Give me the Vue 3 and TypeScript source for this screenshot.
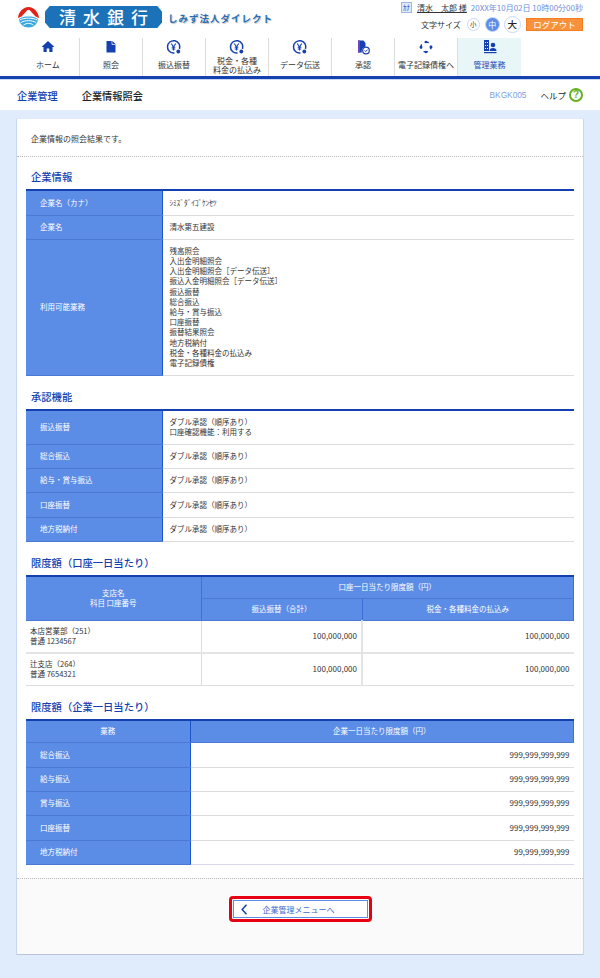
<script setup lang="ts">
const companyRows = [
  { label: '企業名（カナ）', lines: ['ｼﾐｽﾞﾀﾞｲｺﾞｹﾝｾﾂ'], cls: 'h25 kana-row' },
  { label: '企業名', lines: ['清水第五建設'], cls: 'h24' },
  {
    label: '利用可能業務',
    lines: ['残高照会', '入出金明細照会', '入出金明細照会［データ伝送］', '振込入金明細照会［データ伝送］', '振込振替', '総合振込', '給与・賞与振込', '口座振替', '振替結果照会', '地方税納付', '税金・各種料金の払込み', '電子記録債権'],
    cls: 'h136',
  },
]
const approvalRows = [
  { label: '振込振替', lines: ['ダブル承認（順序あり）', '口座確認機能：利用する'], cls: 'h35' },
  { label: '総合振込', lines: ['ダブル承認（順序あり）'], cls: 'h24' },
  { label: '給与・賞与振込', lines: ['ダブル承認（順序あり）'], cls: 'h24' },
  { label: '口座振替', lines: ['ダブル承認（順序あり）'], cls: 'h25' },
  { label: '地方税納付', lines: ['ダブル承認（順序あり）'], cls: 'h24' },
]
const accountRows = [
  { branch: '本店営業部（251）', account: '普通 1234567', cls: 'h33' },
  { branch: '辻支店（264）', account: '普通 7654321', cls: 'h32' },
]
const limitRows = [
  { label: '総合振込', amount: '999,999,999,999', cls: 'h25' },
  { label: '給与振込', amount: '999,999,999,999', cls: 'h24' },
  { label: '賞与振込', amount: '999,999,999,999', cls: 'h24' },
  { label: '口座振替', amount: '999,999,999,999', cls: 'h25' },
  { label: '地方税納付', amount: '99,999,999,999', cls: 'h24' },
]
const navItems = [
  { key: 'home', label: ['ホーム'] },
  { key: 'doc', label: ['照会'] },
  { key: 'yen', label: ['振込振替'] },
  { key: 'yen', label: ['税金・各種', '料金の払込み'] },
  { key: 'yen', label: ['データ伝送'] },
  { key: 'approve', label: ['承認'] },
  { key: 'ring', label: ['電子記録債権へ'] },
  { key: 'admin', label: ['管理業務'], active: true },
]
</script>

<template>
  <div class="page">
    <header class="top">
      <div class="brand">
        <svg class="mark" width="21" height="21" viewBox="0 0 21 21">
          <path d="M0 11 C0.500 5 5 0 10.500 0 C16 0 20.500 5 21 11 L17.500 9.500 L11.500 3 L9.500 3 L3.500 9.500Z" fill="#e2231a" />
          <path d="M0.800 12 C4 10 7 9.500 10.500 9.500 C14 9.500 17 10 20.200 12 C19.500 17 15.500 20.500 10.500 20.500 C5.500 20.500 1.500 17 0.800 12Z" fill="#3aa7de" />
          <path d="M1.500 13 C7 10.500 14 10.500 19.500 13 M2.800 15.500 C8 13 13 13 18.200 15.500 M5.500 18 C9 15.800 12 15.800 15.500 18" stroke="#fff" stroke-width="1" fill="none" />
        </svg>
        <div class="bank">清水銀行</div>
        <div class="tagline">しみず法人ダイレクト</div>
      </div>
      <div class="user">
        <div class="user-line">
          <span class="kana">ｶﾅ</span>
          <span class="name">清水　太郎 様</span>
          <span class="date">20XX年10月02日 10時00分00秒</span>
        </div>
        <div class="tools">
          <span class="size-label">文字サイズ</span>
          <span class="size">小</span>
          <span class="size on">中</span>
          <span class="size big">大</span>
          <span class="logout">ログアウト</span>
        </div>
      </div>
    </header>

    <nav class="nav">
      <div v-for="(item, i) in navItems" :key="i" class="nav-item" :class="{ active: item.active }">
        <svg class="nav-icon" width="18" height="18" viewBox="0 0 18 18" fill="#1540b0">
          <path v-if="item.key === 'home'" d="M9 3 L15.500 9 L13.500 9 L13.500 14 L10.300 14 L10.300 10.500 L7.700 10.500 L7.700 14 L4.500 14 L4.500 9 L2.500 9Z" />
          <g v-else-if="item.key === 'doc'">
            <path d="M4.500 3 L10.500 3 L13.500 6 L13.500 14.500 L4.500 14.500Z" />
            <path d="M10 3 L10 6.500 L13.500 6.500" fill="none" stroke="#fff" stroke-width=".7" />
          </g>
          <g v-else-if="item.key === 'yen'">
            <path d="M14.500 11 A6.200 6.200 0 1 0 9.500 15" fill="none" stroke="#1540b0" stroke-width="1.500" />
            <path d="M6.300 5.500 L8.500 9 L10.700 5.500 M8.500 9 L8.500 12.500 M6.700 9.300 L10.300 9.300 M6.700 11 L10.300 11" fill="none" stroke="#1540b0" stroke-width="1.100" />
            <circle cx="13.300" cy="13.500" r="1.900" />
          </g>
          <g v-else-if="item.key === 'approve'">
            <path d="M4 2.500 L9.500 2.500 L11.500 5 L11.500 8.500 A4.500 4.500 0 0 0 8 14.500 L4 14.500Z" />
            <path d="M4 2.500 L6 2.500 L6 14.500 L4 14.500Z" fill="#6a45b8" />
            <circle cx="12" cy="12.500" r="3.300" fill="#fff" stroke="#1540b0" stroke-width="1.200" />
            <path d="M10.600 12.500 L11.700 13.600 L13.500 11.600" fill="none" stroke="#1540b0" stroke-width="1" />
          </g>
          <g v-else-if="item.key === 'ring'">
            <circle cx="9" cy="9" r="5" fill="none" stroke="#1540b0" stroke-width="1.300" stroke-dasharray="4.500 3.350" stroke-dashoffset="2.200" />
            <circle cx="4" cy="9" r="1.500" />
            <circle cx="14" cy="9" r="1.500" />
            <circle cx="9" cy="4" r="1.200" />
            <circle cx="9" cy="14" r="1.200" />
          </g>
          <g v-else>
            <path d="M3 2 L8 2 L8 13 L3 13Z M4 4 L4 5 L5 5 L5 4Z M6 4 L6 5 L7 5 L7 4Z M4 7 L4 8 L5 8 L5 7Z M6 7 L6 8 L7 8 L7 7Z M4 10 L4 11 L5 11 L5 10Z M6 10 L6 11 L7 11 L7 10Z" fill-rule="evenodd" />
            <circle cx="12" cy="7" r="2.300" />
            <path d="M8.500 13 C8.500 10.800 10 10 12 10 C14 10 15.500 10.800 15.500 13Z" />
            <rect x="3" y="14" width="12.500" height="1.200" />
          </g>
        </svg>
        <div class="nav-label">
          <span v-for="line in item.label" :key="line">{{ line }}</span>
        </div>
      </div>
    </nav>

    <div class="subbar">
      <div class="crumbs">
        <span class="crumb-a">企業管理</span>
        <span class="crumb-b">企業情報照会</span>
      </div>
      <div class="sub-right">
        <span class="code">BKGK005</span>
        <span class="help">ヘルプ</span>
        <span class="help-icon">?</span>
      </div>
    </div>

    <main class="card">
      <p class="lead">企業情報の照会結果です。</p>
      <div class="body">
        <h2>企業情報</h2>
        <table class="tbl info">
          <tbody>
            <tr v-for="row in companyRows" :key="row.label" :class="row.cls">
              <th class="side">{{ row.label }}</th>
              <td><div v-for="line in row.lines" :key="line">{{ line }}</div></td>
            </tr>
          </tbody>
        </table>

        <h2 class="gap33">承認機能</h2>
        <table class="tbl info">
          <tbody>
            <tr v-for="row in approvalRows" :key="row.label" :class="row.cls">
              <th class="side">{{ row.label }}</th>
              <td><div v-for="line in row.lines" :key="line">{{ line }}</div></td>
            </tr>
          </tbody>
        </table>

        <h2 class="gap33">限度額（口座一日当たり）</h2>
        <table class="tbl account">
          <colgroup>
            <col style="width: 175px" />
            <col style="width: 161px" />
            <col />
          </colgroup>
          <thead>
            <tr class="h22">
              <th rowspan="2">支店名<br />科目 口座番号</th>
              <th colspan="2">口座一日当たり限度額（円）</th>
            </tr>
            <tr class="h22">
              <th>振込振替（合計）</th>
              <th>税金・各種料金の払込み</th>
            </tr>
          </thead>
          <tbody>
            <tr v-for="row in accountRows" :key="row.branch" :class="row.cls">
              <td class="branch"><div>{{ row.branch }}</div><div>{{ row.account }}</div></td>
              <td class="num">100,000,000</td>
              <td class="num">100,000,000</td>
            </tr>
          </tbody>
        </table>

        <h2 class="gap33">限度額（企業一日当たり）</h2>
        <table class="tbl limit">
          <colgroup>
            <col style="width: 164px" />
            <col />
          </colgroup>
          <thead>
            <tr class="h23">
              <th>業務</th>
              <th>企業一日当たり限度額（円）</th>
            </tr>
          </thead>
          <tbody>
            <tr v-for="row in limitRows" :key="row.label" :class="row.cls">
              <th class="side">{{ row.label }}</th>
              <td class="num">{{ row.amount }}</td>
            </tr>
          </tbody>
        </table>
      </div>
      <div class="foot">
        <div class="back-ring">
          <button type="button" class="back">
            <svg width="7" height="11" viewBox="0 0 7 11"><path d="M5.500 .8 L1.200 5.500 L5.500 10.200" fill="none" stroke="#1540b0" stroke-width="1.500" /></svg>
            <span>企業管理メニューへ</span>
          </button>
        </div>
      </div>
    </main>
  </div>
</template>

<style>
html, body { margin: 0; background: #e0ebfc; }
</style>

<style scoped>
.page {
  width: 600px; height: 978px; overflow: hidden;
  background: #e0ebfc;
  font-family: "Noto Sans CJK JP", "Liberation Sans", sans-serif;
  font-size: 8px; color: #333;
}
.top {
  height: 38px; background: #fff;
  display: flex; justify-content: space-between;
}
.brand { display: flex; align-items: flex-start; padding: 6px 0 0 18px; }
.mark { margin: 1px 6px 0 0; }
.bank {
  width: 117px; height: 22px; box-sizing: border-box;
  background: #1b72b8; color: #fff;
  clip-path: polygon(4% 0, 96% 0, 100% 25%, 100% 75%, 96% 100%, 4% 100%, 0 75%, 0 25%);
  padding-left: 14px;
  font-size: 17px; line-height: 21px; font-weight: 500; letter-spacing: 7px;
  white-space: nowrap;
}
.tagline {
  margin: 6px 0 0 6px; color: #2a6db0;
  font-size: 9.500px; line-height: 12px; font-weight: 700; letter-spacing: 1px;
  text-shadow: 1px 1px 1px #c4c4c4; white-space: nowrap;
}
.user { padding: 1px 0 0; margin-right: 17px; width: 182px; }
.user-line { display: flex; align-items: center; height: 13px; }
.kana {
  width: 11px; height: 11px; box-sizing: border-box; margin-right: 5px; flex: none;
  border: 1px solid #9db7e6; background: #dfe9fa; color: #1540b0;
  font-size: 7px; line-height: 9px; text-align: center;
}
.name { font-size: 8px; text-decoration: underline; color: #333; white-space: nowrap; }
.date { font-size: 8px; color: #6b90dc; white-space: nowrap; margin-left: auto; }
.tools { display: flex; align-items: center; margin-top: 2px; height: 17px; }
.size-label { margin-left: 20px; font-size: 8px; color: #333; white-space: nowrap; }
.size {
  box-sizing: border-box; border-radius: 50%;
  width: 13px; height: 13px; margin-left: 6px;
  border: 1px solid #c8d8f4; background: #fff;
  font-size: 6.500px; line-height: 11px; text-align: center;
}
.size.on {
  width: 15px; height: 15px; margin-left: 5px;
  background: #5b8de6; color: #fff; border-color: #c8d8f4;
  font-size: 8px; line-height: 13px;
}
.size.big {
  width: 17px; height: 17px; margin-left: 4px;
  font-size: 9.500px; line-height: 15px; font-weight: 500; color: #222;
}
.logout {
  margin-left: auto; width: 57px; height: 13px; box-sizing: border-box;
  background: #f7913c; border: 1px solid #f57c1f; color: #fff;
  font-size: 8.500px; line-height: 11px; text-align: center; white-space: nowrap;
}
.nav {
  height: 38px; display: flex; padding-left: 17px;
  border-bottom: 3px solid #1540b0;
  background: #fff;
}
.nav-item {
  width: 63px; box-sizing: border-box;
  border-right: 1px solid #dcdcdc;
  display: flex; flex-direction: column; align-items: center;
}
.nav-item:last-child { border-right: 0; }
.nav-item.active { background: #e8f6f8; color: #1f50b8; }
.nav-icon { flex: none; }
.nav-label {
  height: 19px; display: flex; flex-direction: column; justify-content: center;
  padding-bottom: 2px; box-sizing: border-box;
  font-size: 8px; line-height: 9px; text-align: center; white-space: nowrap;
}
.subbar {
  height: 31px; box-sizing: border-box; background: #fff;
  border-top: 1px solid #c9d8f3;
  display: flex; align-items: center; justify-content: space-between;
}
.crumbs { padding-left: 17px; display: flex; gap: 24px; font-size: 10.200px; font-weight: 500; }
.crumb-a { color: #1540b0; }
.crumb-b { color: #222; }
.sub-right { display: flex; align-items: center; padding-right: 17px; }
.code { color: #7da0e0; font-size: 8.300px; margin-right: 14px; font-family: "Liberation Sans", sans-serif; }
.help { font-size: 8.500px; color: #222; margin-right: 3px; }
.help-icon {
  width: 14px; height: 14px; box-sizing: border-box; border-radius: 50%;
  border: 2px solid #67b021; color: #67b021;
  font-size: 10px; line-height: 10px; font-weight: 700; text-align: center;
  font-family: "Liberation Sans", sans-serif;
}
.card {
  width: 566px; height: 836px; margin: 9px 0 0 17px; box-sizing: border-box;
  background: #fff;
  border-bottom: 1px solid #b8c4dc;
  box-shadow: -1px 0 0 #c7d6f2, 1px 0 0 #c7d6f2;
  display: flex; flex-direction: column;
}
.lead {
  margin: 0; height: 38px; box-sizing: border-box; padding: 14px 14px 0;
  font-size: 8px; line-height: 12px;
  border-bottom: 1px dotted #bbb;
}
.body { padding: 0 9px; flex: 1; }
h2 {
  margin: 0; height: 32px; padding: 14px 0 0 5px; box-sizing: border-box;
  font-size: 10.300px; line-height: 12px; font-weight: 500; color: #1540b0;
  white-space: nowrap;
}
h2.gap33 { height: 33px; padding-top: 15px; }
.tbl {
  width: 548px; border-collapse: collapse; table-layout: fixed;
  border-top: 2px solid #1540b0;
}
.tbl th, .tbl td { padding: 0; font-weight: 400; font-size: 7.500px; line-height: 10.170px; }
.tbl th {
  background: #5c8de6; color: #fff;
  text-align: center;
  border-bottom: 1px solid #4a78d4;
}
.tbl td { border-bottom: 1px solid #ddd; }
.info th.side { width: 136px; text-align: left; padding-left: 14px; box-sizing: border-box; border-right: 1px solid #1d55c8; }
.info td { padding: 0 7px; box-sizing: border-box; }
.kana-row td { letter-spacing: -.2px; }
.h25 { height: 25px; }
.h24 { height: 24px; }
.h35 { height: 35px; }
.h23 { height: 23px; }
.h22 { height: 22px; }
.h33 { height: 33px; }
.h32 { height: 32px; }
.h136 { height: 136px; }
.account thead th { border-left: 1px solid #3f70d6; border-right: 1px solid #3f70d6; }
.account thead th:first-child { border-left: 0; }
.branch { padding-left: 4px !important; line-height: 10.500px !important; }
.account td { border-bottom: 2px solid #e4e4e4; }
.account tr:last-child td { border-bottom: 1px solid #ddd; }
.account td + td { border-left: 1px solid #ddd; }
.account td + td + td { border-left: 2px solid #e4e4e4; }
.tbl .num { text-align: right; padding-right: 4px; font-size: 8px; }
.limit thead th + th { border-left: 1px solid #1d55c8; border-right: 1px solid #3f70d6; }
.limit th.side { text-align: left; padding-left: 14px; box-sizing: border-box; border-right: 1px solid #1d55c8; }
.limit tr:last-child td { border-bottom-color: #d8d8e8; }
.foot {
  height: 76px; background: #fafafa;
  border-top: 1px dotted #bbb;
  display: flex; justify-content: center; padding-top: 17px; box-sizing: border-box;
}
.back-ring {
  width: 143px; height: 26px; box-sizing: border-box; padding: 1px;
  border: 3px solid #e60012; border-radius: 4px; background: #fff;
}
.back {
  width: 100%; height: 100%; box-sizing: border-box; padding: 0 0 0 7px;
  border: 1px solid #5c8de6; border-radius: 0;
  background: #fff; color: #3f68cf;
  display: flex; align-items: center;
  font-family: inherit; font-size: 8px;
}
.back span { margin-left: 15px; white-space: nowrap; }
</style>
